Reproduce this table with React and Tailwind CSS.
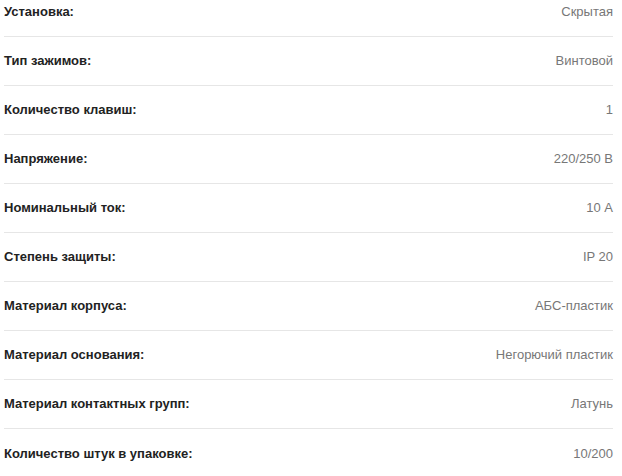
const specs = [
  { name: 'Установка:', value: 'Скрытая' },
  { name: 'Тип зажимов:', value: 'Винтовой' },
  { name: 'Количество клавиш:', value: '1' },
  { name: 'Напряжение:', value: '220/250 В' },
  { name: 'Номинальный ток:', value: '10 А' },
  { name: 'Степень защиты:', value: 'IP 20' },
  { name: 'Материал корпуса:', value: 'АБС-пластик' },
  { name: 'Материал основания:', value: 'Негорючий пластик' },
  { name: 'Материал контактных групп:', value: 'Латунь' },
  { name: 'Количество штук в упаковке:', value: '10/200' },
];

function App() {
  return (
    <div className="min-h-screen bg-white font-['Liberation_Sans',Arial,sans-serif]">
      <div className="pl-[4px] pr-[9px] -mt-[12px]">
        {specs.map((spec, index) => (
          <div
            key={index}
            className={
              index === specs.length - 1
                ? 'flex items-center justify-between h-[49px]'
                : 'flex items-center justify-between h-[49px] border-b border-[#e6e6e6]'
            }
          >
            <span className="text-[13px] font-bold text-[#222]">{spec.name}</span>
            <span className="text-[13px] text-[#777]">{spec.value}</span>
          </div>
        ))}
      </div>
    </div>
  );
}

export default App;
